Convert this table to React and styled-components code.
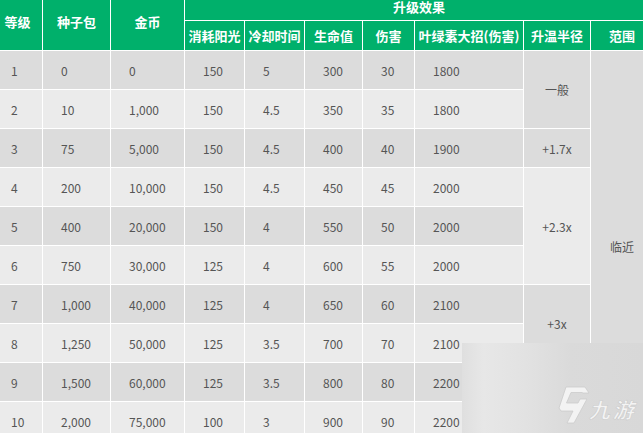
import React from 'react';
import styled, { createGlobalStyle } from 'styled-components';

const GlobalStyle = createGlobalStyle`
    body {
        margin: 0;
        background: #ffffff;
        font-family: "Noto Sans CJK SC", "Noto Sans", sans-serif;
    }
`;

// 表格数据: 等级, 种子包, 金币, 消耗阳光, 冷却时间, 生命值, 伤害, 叶绿素大招
const rows = [
    [1, '0', '0', 150, 5, 300, 30, 1800],
    [2, '10', '1,000', 150, 4.5, 350, 35, 1800],
    [3, '75', '5,000', 150, 4.5, 400, 40, 1900],
    [4, '200', '10,000', 150, 4.5, 450, 45, 2000],
    [5, '400', '20,000', 150, 4, 550, 50, 2000],
    [6, '750', '30,000', 125, 4, 600, 55, 2000],
    [7, '1,000', '40,000', 125, 4, 650, 60, 2100],
    [8, '1,250', '50,000', 125, 3.5, 700, 70, 2100],
    [9, '1,500', '60,000', 125, 3.5, 800, 80, 2200],
    [10, '2,000', '75,000', 100, 3, 900, 90, 2200],
];

// 升温半径 合并单元格 (起始行 -> [文字, 跨行])
const radius = {
    1: ['一般', 2],
    3: ['+1.7x', 1],
    4: ['+2.3x', 3],
    7: ['+3x', 2],
    9: ['', 2],
};

const widths = [50, 68, 74, 60, 60, 58, 52, 109, 67, 63];

const subHeads = ['消耗阳光', '冷却时间', '生命值', '伤害', '叶绿素大招(伤害)', '升温半径', '范围'];

export default function App() {
    return (
        <Frame>
            <GlobalStyle />
            <Table>
                <colgroup>
                    {widths.map((w, i) => (
                        <col key={i} style={{ width: w }} />
                    ))}
                </colgroup>
                <thead>
                    <tr>
                        <Th rowSpan={2}>等级</Th>
                        <Th rowSpan={2}>种子包</Th>
                        <Th rowSpan={2}>金币</Th>
                        <Th colSpan={7} $top>
                            升级效果
                        </Th>
                    </tr>
                    <tr>
                        {subHeads.map((h) => (
                            <Th key={h}>{h}</Th>
                        ))}
                    </tr>
                </thead>
                <tbody>
                    {rows.map((r) => {
                        const dark = r[0] % 2 === 1;
                        const rad = radius[r[0]];
                        return (
                            <tr key={r[0]}>
                                {r.map((v, i) => (
                                    <Td key={i} $dark={dark}>
                                        {v}
                                    </Td>
                                ))}
                                {rad && (
                                    <Td $dark={dark} $center rowSpan={rad[1]}>
                                        {rad[0]}
                                    </Td>
                                )}
                                {r[0] === 1 && (
                                    <Td $dark $center $range rowSpan={10}>
                                        临近
                                    </Td>
                                )}
                            </tr>
                        );
                    })}
                </tbody>
            </Table>
            <Watermark>
                <Logo width="34" height="38" viewBox="0 0 34 38">
                    <path
                        d="M10 1 H29 L33 7 H27 L26 6.5 H15 L10.5 17 H22 L24 13 H31 L18 37 H11 L17 25 H5 L3 22 Z"
                        fill="#f3f3f3"
                        stroke="#cccccc"
                        strokeWidth="0.8"
                        strokeLinejoin="round"
                    />
                </Logo>
                <Brand>九游</Brand>
            </Watermark>
        </Frame>
    );
}

const Frame = styled.div`
    position: relative;
    width: 643px;
    height: 433px;
    overflow: hidden;
    background: #dcdcdc;
`;

const Table = styled.table`
    margin: -8px 0 0 -8px;
    width: 661px;
    table-layout: fixed;
    border-collapse: collapse;
`;

const Th = styled.th`
    height: ${(p) => (p.$top ? '27px' : '29px')};
    padding: 0;
    background: #00b06b;
    color: #ffffff;
    border: 1px solid #ffffff;
    font-size: 13px;
    font-weight: bold;
    text-align: center;
    white-space: nowrap;
`;

const Td = styled.td`
    height: 38px;
    padding: 0 0 0 ${(p) => (p.$center ? '0' : '18px')};
    background: ${(p) => (p.$dark ? '#dcdcdc' : '#ebebeb')};
    color: #555555;
    border: 1px solid #ffffff;
    font-size: 12px;
    text-align: ${(p) => (p.$center ? 'center' : 'left')};
    padding-top: ${(p) => (p.$range ? '2px' : '0')};
    white-space: nowrap;
`;

const Watermark = styled.div`
    position: absolute;
    right: 0;
    bottom: 0;
    width: 181px;
    height: 90px;
    display: flex;
    align-items: flex-end;
    justify-content: flex-end;
    gap: 1px;
    padding: 0 4px 9px 0;
    box-sizing: border-box;
    background: linear-gradient(90deg, #dfdfdf 0%, #e7e7e7 12%, #e2e2e2 35%, #dadada 60%, #d8d8d8 100%);
`;

const Logo = styled.svg`
    display: block;
    flex-shrink: 0;
`;

const Brand = styled.span`
    display: block;
    font-family: "Noto Sans CJK SC", sans-serif;
    font-size: 21px;
    font-weight: bold;
    line-height: 24px;
    color: #f4f4f4;
    -webkit-text-stroke: 0.5px #c8c8c8;
    letter-spacing: 3px;
    white-space: nowrap;
    transform: skewX(-14deg);
    margin-bottom: 3px;
`;
